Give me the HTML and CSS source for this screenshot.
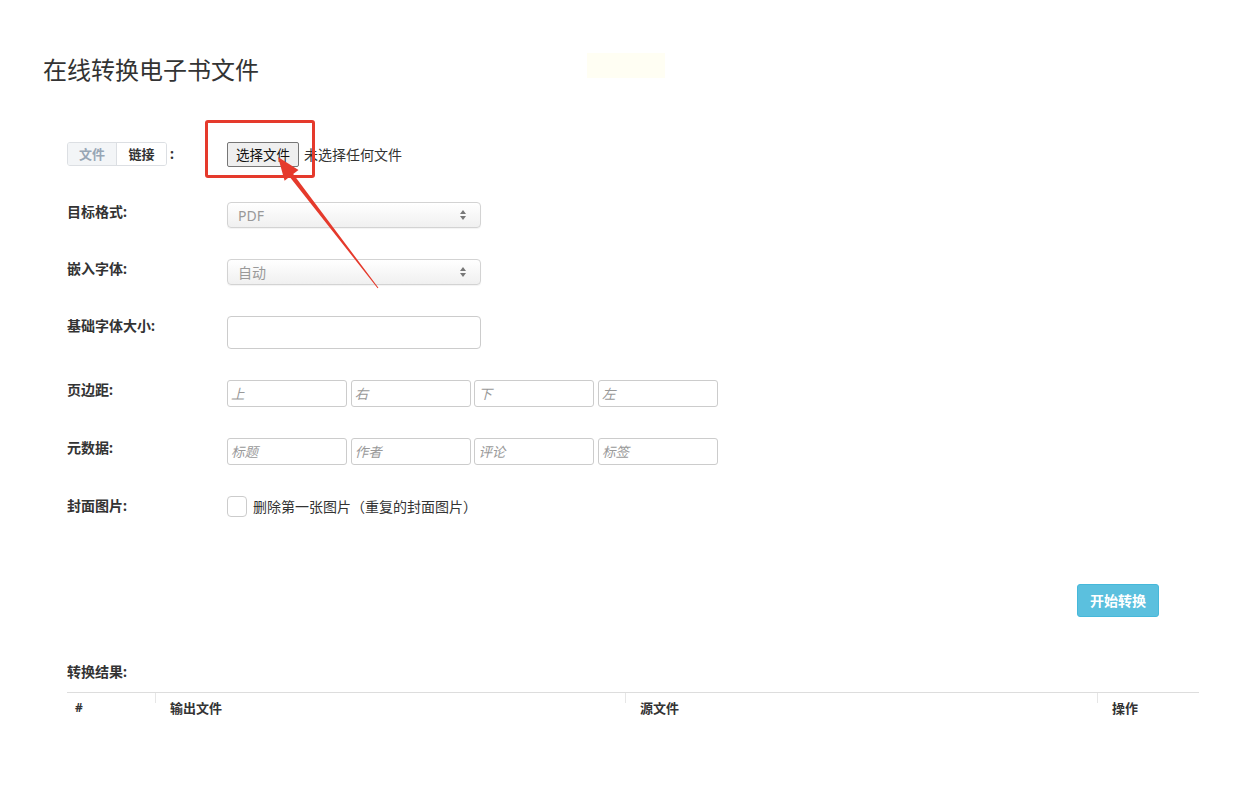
FILE: index.html
```html
<!DOCTYPE html>
<html lang="zh-CN">
<head>
    <meta charset="UTF-8">
    <meta name="viewport" content="width=device-width, initial-scale=1.0">
    <title>在线转换电子书文件</title>
    <link rel="stylesheet" href="styles.css">
</head>
<body>
    <div class="page">
        <h1 class="title">在线转换电子书文件</h1>
        <div class="notice"></div>

        <div class="form">
            <div class="row row-first">
                <div class="label label-switch">
                    <span class="tabs">
                        <a href="javascript:;" class="tab active">文件</a>
                        <a href="javascript:;" class="tab">链接</a>
                    </span>
                    <span class="colon">:</span>
                </div>
                <div class="field file-field">
                    <button class="file-btn">选择文件</button>
                    <span class="file-name">未选择任何文件</span>
                </div>
            </div>

            <div class="row">
                <div class="label">目标格式:</div>
                <div class="field">
                    <div class="select">
                        <span>PDF</span>
                        <svg class="caret" width="8" height="12" viewBox="0 0 8 12"><path d="M4 1 L7 5 L1 5 Z M4 11 L7 7 L1 7 Z" fill="#777"/></svg>
                    </div>
                </div>
            </div>

            <div class="row">
                <div class="label">嵌入字体:</div>
                <div class="field">
                    <div class="select">
                        <span>自动</span>
                        <svg class="caret" width="8" height="12" viewBox="0 0 8 12"><path d="M4 1 L7 5 L1 5 Z M4 11 L7 7 L1 7 Z" fill="#777"/></svg>
                    </div>
                </div>
            </div>

            <div class="row">
                <div class="label">基础字体大小:</div>
                <div class="field">
                    <input type="text" class="text-input">
                </div>
            </div>

            <div class="row">
                <div class="label">页边距:</div>
                <div class="field inputs">
                    <input type="text" class="small-input" placeholder="上">
                    <input type="text" class="small-input" placeholder="右">
                    <input type="text" class="small-input" placeholder="下">
                    <input type="text" class="small-input" placeholder="左">
                </div>
            </div>

            <div class="row">
                <div class="label">元数据:</div>
                <div class="field inputs">
                    <input type="text" class="small-input" placeholder="标题">
                    <input type="text" class="small-input" placeholder="作者">
                    <input type="text" class="small-input" placeholder="评论">
                    <input type="text" class="small-input" placeholder="标签">
                </div>
            </div>

            <div class="row">
                <div class="label">封面图片:</div>
                <div class="field check-field">
                    <span class="checkbox"></span>
                    <span class="check-text">删除第一张图片（重复的封面图片）</span>
                </div>
            </div>

            <div class="actions">
                <a href="javascript:;" class="btn-start">开始转换</a>
            </div>

            <div class="result-title">转换结果:</div>
            <table class="result">
                <thead>
                    <tr>
                        <th class="col-no">#</th>
                        <th class="col-out">输出文件</th>
                        <th class="col-src">源文件</th>
                        <th class="col-op">操作</th>
                    </tr>
                </thead>
                <tbody></tbody>
            </table>
        </div>
    </div>

    <!-- 标注：红框和箭头 -->
    <div class="mark-box"></div>
    <svg class="mark-arrow" width="1251" height="807" viewBox="0 0 1251 807">
        <polygon points="278,157 298.5,170 293.2,174 378.4,287.8 377.6,288.2 289.6,176.7 284.6,180.8" fill="#e53a2c"/>
    </svg>
</body>
</html>
```

FILE: styles.css
```css
*{
    margin: 0;
    padding: 0;
    box-sizing: border-box;
}
body{
    font-family: "Noto Sans", "Noto Sans CJK SC", sans-serif;
    font-size: 13px;
    color: #333;
    background-color: #fff;
}
.page{
    padding: 53px 52px 0 43px;
    position: relative;
}
.title{
    font-size: 24px;
    font-weight: normal;
    line-height: 34px;
    color: #333;
}
.notice{
    position: absolute;
    left: 587px;
    top: 53px;
    width: 78px;
    height: 25px;
    background-color: #fffef3;
}
.form{
    padding-left: 24px;
    margin-top: 54px;
}
.row{
    display: flex;
    align-items: flex-start;
    margin-bottom: 31px;
}
.row.row-first{
    margin-bottom: 35px;
    align-items: center;
    height: 26px;
}
.label{
    width: 160px;
    flex-shrink: 0;
    font-size: 14px;
    font-weight: bold;
    line-height: 20px;
}
.label-switch{
    display: flex;
    align-items: center;
}
.tabs{
    display: flex;
    border: 1px solid #dcdfe3;
    border-radius: 3px;
    overflow: hidden;
    font-size: 13px;
}
.tab{
    display: block;
    width: 49px;
    height: 22px;
    line-height: 22px;
    text-align: center;
    text-decoration: none;
    color: #333;
    font-weight: bold;
    background-color: #fff;
}
.tab.active{
    color: #97a6b5;
    background-color: #f3f5f7;
    border-right: 1px solid #dcdfe3;
}
.colon{
    margin-left: 3px;
    font-weight: bold;
}
.file-field{
    display: flex;
    align-items: center;
    font-size: 14px;
}
.file-btn{
    width: 72px;
    height: 25px;
    font-family: inherit;
    font-size: 13.5px;
    color: #111;
    background-color: #efefef;
    border: 1px solid #767676;
    border-radius: 2px;
}
.file-name{
    margin-left: 5px;
}
.select{
    width: 254px;
    height: 26px;
    display: flex;
    align-items: center;
    justify-content: space-between;
    padding: 0 13px 0 10px;
    border: 1px solid #d3d3d3;
    border-radius: 4px;
    background: linear-gradient(#ffffff, #f0f0f0);
    box-shadow: 0 1px 1px rgba(0,0,0,0.05);
    color: #999;
    font-size: 14px;
}
.caret{
    display: block;
}
.text-input{
    width: 254px;
    height: 33px;
    border: 1px solid #ccc;
    border-radius: 4px;
    outline: none;
}
.inputs{
    display: flex;
    gap: 3.7px;
}
.small-input{
    width: 120px;
    height: 27px;
    padding-left: 3px;
    border: 1px solid #ccc;
    border-radius: 3px;
    font-family: inherit;
    font-size: 13.5px;
    outline: none;
}
.small-input::placeholder{
    color: #999;
    font-style: italic;
}
.check-field{
    display: flex;
    align-items: center;
    font-size: 14px;
}
.checkbox{
    display: block;
    width: 20px;
    height: 21px;
    border: 1px solid #ccc;
    border-radius: 4px;
}
.check-text{
    margin-left: 6px;
    line-height: 20px;
}
.actions{
    display: flex;
    justify-content: flex-end;
    padding-right: 40px;
    margin-top: 67px;
}
.btn-start{
    display: block;
    width: 82px;
    height: 33px;
    line-height: 31px;
    text-align: center;
    text-decoration: none;
    color: #fff;
    font-size: 14px;
    font-weight: bold;
    background-color: #5bc0de;
    border: 1px solid #46b8da;
    border-radius: 3px;
}
.result-title{
    margin-top: 45px;
    line-height: 20px;
    font-size: 14px;
    font-weight: bold;
}
.result{
    width: 100%;
    margin-top: 10px;
    border-collapse: collapse;
    border-top: 1px solid #ddd;
}
.result th{
    text-align: left;
    font-weight: bold;
    height: 29px;
    padding: 0 15px;
    background: linear-gradient(#e6e6e6, #e6e6e6) no-repeat left top / 1px 10px;
}
.result th.col-no{
    width: 88px;
    padding-left: 8px;
    background: none;
    font-size: 12px;
}
.result th.col-out{
    width: 470px;
}
.result th.col-src{
    width: 472px;
}
.mark-box{
    position: absolute;
    left: 205px;
    top: 120px;
    width: 110px;
    height: 58px;
    border: 3px solid #e53a2c;
    border-radius: 3px;
}
.mark-arrow{
    position: absolute;
    left: 0;
    top: 0;
    pointer-events: none;
}
```
